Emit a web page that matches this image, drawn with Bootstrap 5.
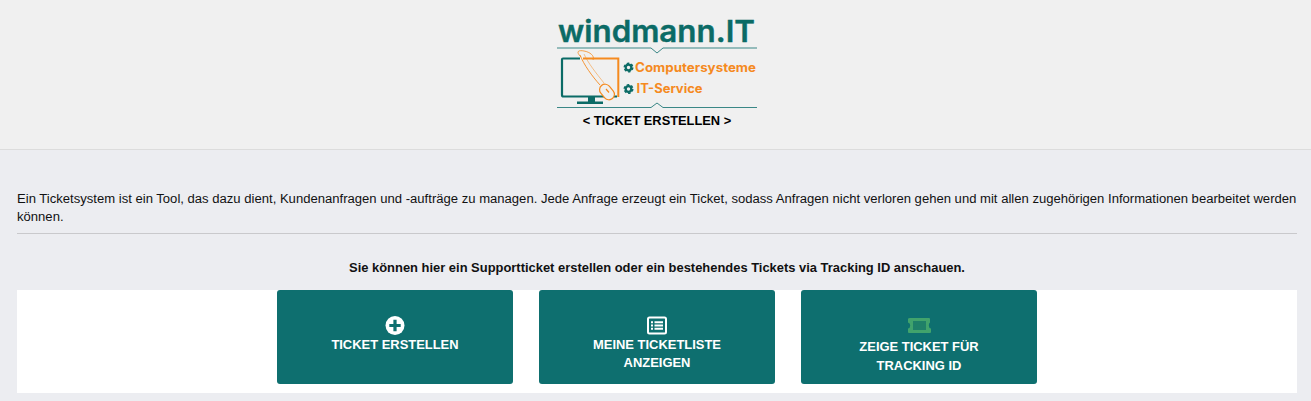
<!DOCTYPE html>
<html lang="de">
<head>
  <meta charset="UTF-8" />
  <meta name="viewport" content="width=device-width, initial-scale=1.0"/>
  <title>Ticket erstellen</title>
  <link href="https://cdn.jsdelivr.net/npm/bootstrap@5.3.2/dist/css/bootstrap.min.css" rel="stylesheet"/>
  <style>
    body {
      background: #ecedf1;
      font-family: "Liberation Sans", Arial, sans-serif;
      font-size: 13px;
      line-height: 18px;
      color: #111;
    }
    .site-head {
      height: 150px;
      padding: 6px 0 0 3px;
      background: #f0f0f0;
      border-bottom: 1px solid #dcdcdc;
    }
    .site-logo {
      display: block;
      width: 200px;
      height: 105px;
    }
    .site-title {
      margin-top: 1px;
      font-size: 12.85px;
      font-weight: 700;
      line-height: 18px;
      color: #000;
    }
    .page-main {
      padding: 40px 14px 0 17px;
    }
    .intro-text {
      margin-bottom: 7px;
      font-size: 13.09px;
    }
    .intro-rule {
      margin: 0;
      border-top: 1px solid #c9c9cc;
      opacity: 1;
    }
    .lead-line {
      margin: 25px 0 13px;
      font-size: 12.93px;
      font-weight: 700;
      text-align: center;
    }
    .action-strip {
      padding-left: 260px;
      padding-bottom: 9px;
      gap: 26px;
    }
    .action-btn {
      width: 236px;
      height: 94px;
      padding: 26px 30px 0;
      background: #0e6f6f;
      border: 0;
      border-radius: 3px;
      color: #fff;
      font-size: 12.95px;
      font-weight: 700;
      line-height: 18px;
    }
    .action-btn:hover {
      background: #0e6f6f;
      color: #fff;
    }
    .action-btn svg {
      display: block;
      margin: 0 auto 1px;
    }
    .action-btn.ticket-track {
      padding-top: 28px;
      line-height: 19px;
    }
    .action-btn.ticket-track svg {
      margin-bottom: 4px;
    }
    .logo-word {
      font-family: Inter, "Liberation Sans", sans-serif;
      font-size: 30px;
      font-weight: 600;
      fill: #0b6b66;
      stroke: #0b6b66;
      stroke-width: .4px;
    }
    .logo-sub {
      font-family: Inter, "Liberation Sans", sans-serif;
      font-size: 12.5px;
      font-weight: 700;
      fill: #f58a1f;
    }
  </style>
</head>
<body>

  <header class="site-head d-flex flex-column align-items-center">
    <svg class="site-logo" viewBox="0 -4 200 105" xmlns="http://www.w3.org/2000/svg">
      <text class="logo-word" x="1" y="32" textLength="197" lengthAdjust="spacingAndGlyphs">windmann.IT</text>
      <path d="M0 38H94L100 43L106 38H200" fill="none" stroke="#3a8786" stroke-width="1"/>
      <path d="M0 97.500H94L100 93L106 97.500H200" fill="none" stroke="#3a8786" stroke-width="1"/>
      <!-- monitor -->
      <path d="M23 48.500H6Q5 48.500 5 49.500V85Q5 86.500 6.500 86.500H60" fill="none" stroke="#0b6b66" stroke-width="2.200"/>
      <path d="M26 48.500H61.300V87" fill="none" stroke="#f58a1f" stroke-width="2"/>
      <path d="M31 87H38V91.500H46V94H20V91.500H31Z" fill="#0b6b66"/>
      <!-- mouse and cable -->
      <path d="M24 47C18 41 22 40 27 41C33 42 38 46 36 50" fill="none" stroke="#f58a1f" stroke-width=".8"/>
      <path d="M23 45C27 55 35 66 43 75" fill="none" stroke="#f58a1f" stroke-width=".9"/>
      <path d="M27 44C31 53 39 63 47 73" fill="none" stroke="#f58a1f" stroke-width=".5"/>
      <rect x="-5.500" y="-8.500" width="11" height="17" rx="5.500" transform="translate(50 82) rotate(-40)" fill="#f0f0f0" stroke="#f58a1f" stroke-width="1.200"/>
      <path d="M49 79L52 82.500" stroke="#f58a1f" stroke-width="1.200"/>
      <!-- gears -->
      <circle cx="71.500" cy="57.500" r="2.800" fill="none" stroke="#0b6b66" stroke-width="2.200"/>
      <circle cx="71.500" cy="57.500" r="4.300" fill="none" stroke="#0b6b66" stroke-width="1.400" stroke-dasharray="2.500 2"/>
      <circle cx="71.500" cy="79" r="2.800" fill="none" stroke="#0b6b66" stroke-width="2.200"/>
      <circle cx="71.500" cy="79" r="4.300" fill="none" stroke="#0b6b66" stroke-width="1.400" stroke-dasharray="2.500 2"/>
      <text class="logo-sub" x="78" y="61.700" textLength="121" lengthAdjust="spacingAndGlyphs">Computersysteme</text>
      <text class="logo-sub" x="79.500" y="83.300" textLength="66" lengthAdjust="spacingAndGlyphs">IT-Service</text>
    </svg>
    <div class="site-title">&lt; TICKET ERSTELLEN &gt;</div>
  </header>

  <main class="page-main">
    <p class="intro-text">Ein Ticketsystem ist ein Tool, das dazu dient, Kundenanfragen und -aufträge zu managen. Jede Anfrage erzeugt ein Ticket, sodass Anfragen nicht verloren gehen und mit allen zugehörigen Informationen bearbeitet werden können.</p>
    <hr class="intro-rule">
    <p class="lead-line">Sie können hier ein Supportticket erstellen oder ein bestehendes Tickets via Tracking ID anschauen.</p>
    <div class="action-strip d-flex bg-white">
      <a class="action-btn btn d-flex flex-column align-items-center" href="#">
        <svg width="20" height="19" viewBox="0 0 20 20" xmlns="http://www.w3.org/2000/svg">
          <circle cx="10" cy="10" r="10" fill="#fff"/>
          <path d="M8.300 4H11.700V8.300H16V11.700H11.700V16H8.300V11.700H4V8.300H8.300Z" fill="#0e6f6f"/>
        </svg>
        TICKET ERSTELLEN
      </a>
      <a class="action-btn btn d-flex flex-column align-items-center" href="#">
        <svg width="20" height="19" viewBox="0 0 20 18" xmlns="http://www.w3.org/2000/svg">
          <rect x="1" y="1" width="18" height="16" rx="1.500" fill="none" stroke="#fff" stroke-width="2"/>
          <path d="M4 4.800H6V6.800H4ZM4 8H6V10H4ZM4 11.200H6V13.200H4ZM7.500 4.800H16V6.800H7.500ZM7.500 8H16V10H7.500ZM7.500 11.200H16V13.200H7.500Z" fill="#fff"/>
        </svg>
        MEINE TICKETLISTE ANZEIGEN
      </a>
      <a class="action-btn ticket-track btn d-flex flex-column align-items-center" href="#">
        <svg width="23" height="15" viewBox="0 0 23 15" xmlns="http://www.w3.org/2000/svg">
          <path fill-rule="evenodd" d="M2 0H21Q22 0 22 1V4.500Q20.800 5 20.800 7.500T23 10.500V14Q23 15 22 15H1Q0 15 0 14V10.500Q2.200 10 2.200 7.500T0 4.500V1Q0 0 2 0ZM5 3V12H18V3Z" fill="#41a36c"/>
          <rect x="5" y="3" width="13" height="9" fill="#1f8068"/>
        </svg>
        ZEIGE TICKET FÜR TRACKING ID
      </a>
    </div>
  </main>

  <script src="https://cdn.jsdelivr.net/npm/bootstrap@5.3.2/dist/js/bootstrap.bundle.min.js"></script>
</body>
</html>
